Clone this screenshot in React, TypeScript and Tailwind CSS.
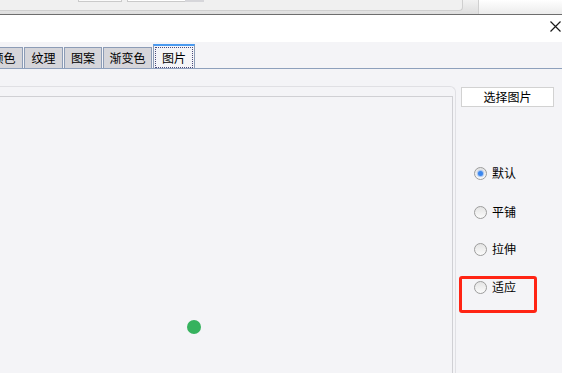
import React from "react";

const font = { fontFamily: '"Noto Sans CJK SC", "Noto Sans", sans-serif' };

function Radio({ label, checked }: { label: string; checked?: boolean }) {
  return (
    <div className="flex items-center h-[16px]">
      <div className="ml-[18px] w-[13px] h-[13px] rounded-full border border-[#9c9c9c] bg-gradient-to-b from-[#e4e4e4] to-[#fbfbfb] flex items-center justify-center">
        {checked && <div className="w-[5px] h-[5px] rounded-full bg-[#3a86ee] shadow-[0_0_1px_1px_rgba(90,150,240,0.5)]" />}
      </div>
      <span className="ml-[5px] text-[12px] leading-[16px] text-black">{label}</span>
    </div>
  );
}

function Tab({ label, w }: { label: string; w: string }) {
  return (
    <div
      className={`${w} h-[21px] flex-none border-t border-l border-r border-[#8c9cb6] bg-[#d5d5da] flex items-center justify-center text-[12px] text-black`}
    >
      {label}
    </div>
  );
}

export default function App() {
  return (
    <div className="w-[562px] h-[373px] overflow-hidden flex flex-col bg-[#f4f4f7]" style={font}>
      {/* background window strip */}
      <div className="h-[14px] flex-none flex bg-gradient-to-b from-[#f2f2f2] to-[#dedede]">
        <div className="w-[463px] h-[11px] flex-none border-b border-r border-[#cfcfcf] rounded-br-[4px] bg-[#f0f0f0] flex items-start">
          <div className="ml-[78px] w-[44px] h-[2px] border-x border-b border-[#cacaca] bg-[#fafafa]" />
          <div className="ml-[5px] w-[58px] h-[2px] border-l border-b border-[#cacaca] bg-white" />
          <div className="w-[19px] h-[2px] bg-[#d6d6da]" />
        </div>
        <div className="w-[15px] flex-none" />
        <div className="flex-1 border-l border-[#d0d0d0] bg-gradient-to-b from-[#ffffff] to-[#ececec]" />
      </div>
      <div className="h-px flex-none bg-[#6e6e6e]" />
      {/* title bar */}
      <div className="h-[27px] flex-none bg-white flex justify-end items-start">
        <svg className="mt-[6px] mr-[1px]" width="11" height="11" viewBox="0 0 11 11">
          <path d="M0.5 0.5 L10.5 10.5 M10.5 0.5 L0.5 10.5" stroke="#1a1a1a" strokeWidth="1.2" fill="none" />
        </svg>
      </div>
      {/* tabs */}
      <div className="h-[27px] flex-none flex items-end border-b border-[#8ea0bc] -ml-[16px] gap-px">
        <Tab label="颜色" w="w-[39px]" />
        <Tab label="纹理" w="w-[39px]" />
        <Tab label="图案" w="w-[38px]" />
        <Tab label="渐变色" w="w-[49px]" />
        <div className="w-[42px] h-[24px] flex-none border-t-2 border-t-[#4a9af0] border-l border-r border-[#8c9cb6] bg-[#f4f4f7] p-[1px] pb-0 flex">
          <div className="flex-1 border border-dotted border-[#4a4a7a] flex items-center justify-center text-[12px] text-black leading-none">
            图片
          </div>
        </div>
      </div>
      {/* body */}
      <div className="flex-1 flex min-h-0">
        <div className="w-[456px] flex-none mt-[17px] border-t border-r border-[#e0e0e4] rounded-tr-[6px] pt-[9px] pr-[2px] flex flex-col">
          <div className="flex-1 border-t border-r border-[#d0d0d4] flex flex-col">
            <div className="mt-[223px] ml-[187px] w-[14px] h-[14px] rounded-full bg-[#36b25e]" />
          </div>
        </div>
        <div className="flex-1 flex flex-col">
          <div className="mt-[18px] ml-[5px] w-[93px] h-[20px] border border-[#d2d2d2] bg-white flex items-center justify-center text-[12px] text-black">
            选择图片
          </div>
          <div className="mt-[58px]">
            <Radio label="默认" checked />
          </div>
          <div className="mt-[23px]">
            <Radio label="平铺" />
          </div>
          <div className="mt-[21px]">
            <Radio label="拉伸" />
          </div>
          <div className="mt-[19px] ml-[3px] w-[78px] h-[37px] border-[3px] border-[#ff2414] rounded-[3px]">
            <div className="-ml-[6px]">
              <Radio label="适应" />
            </div>
          </div>
        </div>
      </div>
    </div>
  );
}
